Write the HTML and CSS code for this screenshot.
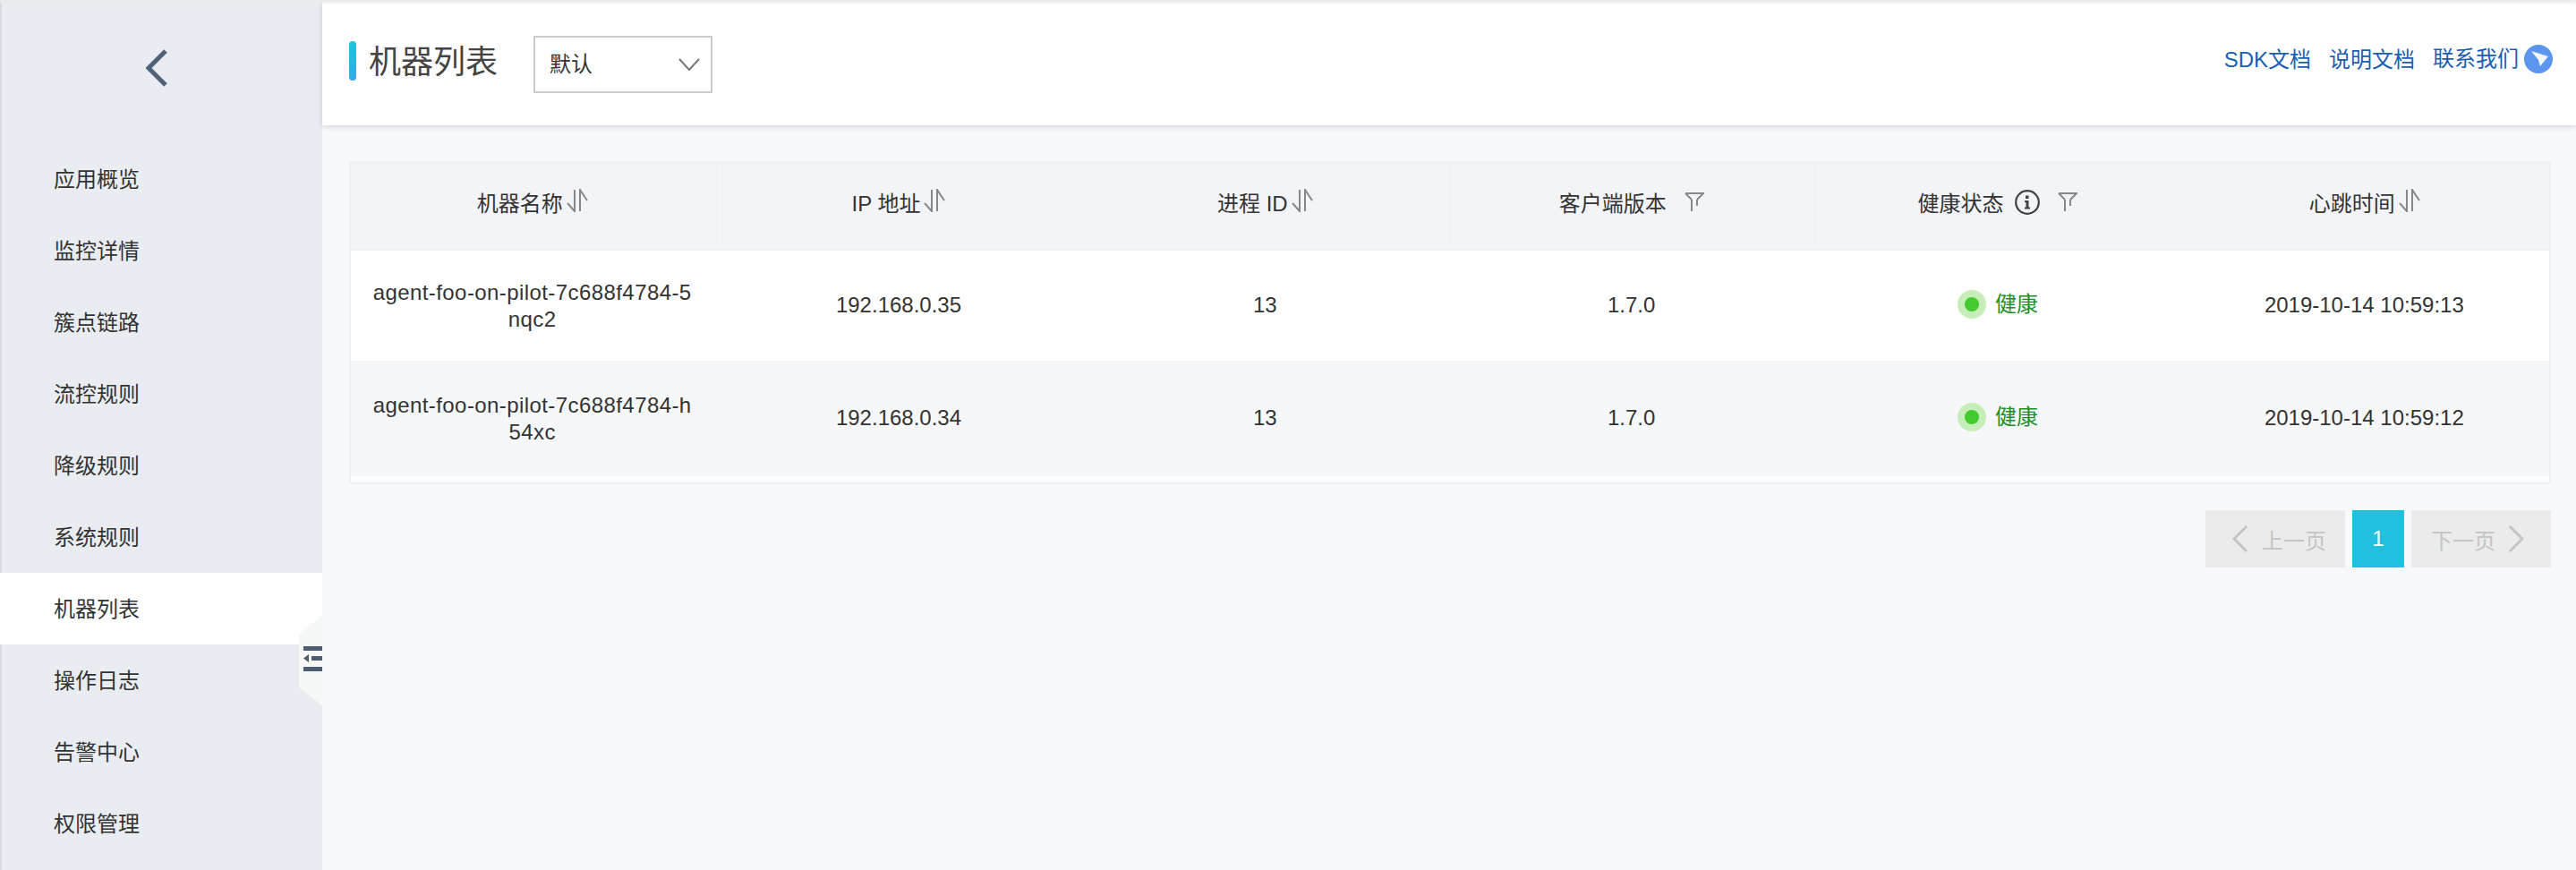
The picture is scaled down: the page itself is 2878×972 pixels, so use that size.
FILE: index.html
```html
<!DOCTYPE html>
<html lang="zh-CN">
<head>
<meta charset="utf-8">
<title>机器列表</title>
<link rel="stylesheet" href="styles.css">
</head>
<body>
<div class="app">
  <aside class="sidebar">
    <div class="back">
      <svg class="back-icon" viewBox="0 0 26 42"><path d="M23 2 L4 21 L23 40"/></svg>
    </div>
    <nav class="nav">
      <a class="nav-item">应用概览</a>
      <a class="nav-item">监控详情</a>
      <a class="nav-item">簇点链路</a>
      <a class="nav-item">流控规则</a>
      <a class="nav-item">降级规则</a>
      <a class="nav-item">系统规则</a>
      <a class="nav-item active">机器列表</a>
      <a class="nav-item">操作日志</a>
      <a class="nav-item">告警中心</a>
      <a class="nav-item">权限管理</a>
    </nav>
    <div class="collapse">
      <svg class="collapse-icon" viewBox="0 0 21 28"><path d="M0 0H21V5H0ZM9 11H21V16H9ZM0 23H21V28H0ZM6 9V18L0 13.5Z"/></svg>
    </div>
  </aside>
  <main class="main">
    <header class="topbar">
      <div class="title-wrap">
        <span class="title-bar"></span>
        <h1 class="title">机器列表</h1>
        <div class="select">
          <span class="select-text">默认</span>
          <svg class="select-arrow" viewBox="0 0 24 14"><path d="M1 1 L12 13 L23 1"/></svg>
        </div>
      </div>
      <div class="links">
        <a class="link">SDK文档</a>
        <a class="link">说明文档</a>
        <a class="link link-contact">联系我们
          <svg class="contact-icon" viewBox="0 0 32 32"><circle cx="16" cy="16" r="16" fill="#5b95ee"/><path d="M8 7 L27 13 L18 24 L16 17 Z" fill="#f2f6fd"/></svg>
        </a>
      </div>
    </header>
    <section class="content">
      <div class="table-box">
        <table class="table">
          <thead>
            <tr>
              <th><span class="th">机器名称<svg class="sort" viewBox="0 0 24 26"><path d="M1 16L9 25V1M15 25V1L23 13"/></svg></span></th>
              <th><span class="th">IP 地址<svg class="sort" viewBox="0 0 24 26"><path d="M1 16L9 25V1M15 25V1L23 13"/></svg></span></th>
              <th><span class="th">进程 ID<svg class="sort" viewBox="0 0 24 26"><path d="M1 16L9 25V1M15 25V1L23 13"/></svg></span></th>
              <th><span class="th">客户端版本<svg class="filter" viewBox="0 0 22 22"><path d="M1 1H21L14 8M8 8L1 1M14 8V15M8 8V21"/></svg></span></th>
              <th><span class="th">健康状态<svg class="info" viewBox="0 0 28 28"><circle cx="14" cy="14" r="12.800"/><path class="info-dot" d="M12 6.500H15.500V10H12ZM11 12H15.500V19.500H17V21.500H11V19.500H12.500V14H11Z"/></svg><svg class="filter" viewBox="0 0 22 22"><path d="M1 1H21L14 8M8 8L1 1M14 8V15M8 8V21"/></svg></span></th>
              <th><span class="th">心跳时间<svg class="sort" viewBox="0 0 24 26"><path d="M1 16L9 25V1M15 25V1L23 13"/></svg></span></th>
            </tr>
          </thead>
          <tbody>
            <tr class="row-a">
              <td class="cell-name">agent-foo-on-pilot-7c688f4784-5nqc2</td>
              <td><span class="cell-text">192.168.0.35</span></td>
              <td><span class="cell-text">13</span></td>
              <td><span class="cell-text">1.7.0</span></td>
              <td><span class="health"><i class="dot"></i>健康</span></td>
              <td><span class="cell-text">2019-10-14 10:59:13</span></td>
            </tr>
            <tr class="row-b">
              <td class="cell-name">agent-foo-on-pilot-7c688f4784-h54xc</td>
              <td><span class="cell-text">192.168.0.34</span></td>
              <td><span class="cell-text">13</span></td>
              <td><span class="cell-text">1.7.0</span></td>
              <td><span class="health"><i class="dot"></i>健康</span></td>
              <td><span class="cell-text">2019-10-14 10:59:12</span></td>
            </tr>
          </tbody>
        </table>
      </div>
      <div class="pager">
        <button class="page-btn page-nav page-prev" disabled>
          <svg class="page-arrow" viewBox="0 0 18 32"><path d="M16 2 L2 16 L16 30"/></svg>上一页
        </button>
        <button class="page-btn page-current">1</button>
        <button class="page-btn page-nav page-next" disabled>
          下一页<svg class="page-arrow" viewBox="0 0 18 32"><path d="M2 2 L16 16 L2 30"/></svg>
        </button>
      </div>
    </section>
  </main>
</div>
</body>
</html>
```

FILE: styles.css
```css
* { box-sizing: border-box; }
html, body { margin: 0; height: 100%; }
body {
  font-family: "Liberation Sans", "Noto Sans CJK SC", sans-serif;
  font-size: 24px;
  color: #333;
  background: #f7f9fd;
  overflow: hidden;
}
.app {
  display: flex;
  height: 972px;
  position: relative;
}
.app::after {
  content: "";
  position: absolute;
  left: 0;
  right: 0;
  top: 0;
  height: 6px;
  background: linear-gradient(#e9eaec, rgba(240, 240, 242, 0));
  pointer-events: none;
}
.sidebar {
  width: 360px;
  flex: none;
  background: #e9edf2;
  position: relative;
  overflow: hidden;
  box-shadow: inset 2px 0 0 #d6d9df;
}
.back {
  height: 160px;
  padding: 55px 0 0 162px;
}
.back-icon {
  display: block;
  width: 26px;
  height: 42px;
  fill: none;
  stroke: #4f6279;
  stroke-width: 5;
}
.nav { display: flex; flex-direction: column; }
.nav-item {
  height: 80px;
  padding: 0 0 4px 60px;
  display: flex;
  align-items: center;
  color: #333;
}
.nav-item.active { background: #fff; }
.collapse {
  position: absolute;
  left: 334px;
  top: 688px;
  width: 52px;
  height: 100px;
  background: #f6f7f7;
  clip-path: polygon(0 20%, 50% 0, 100% 0, 100% 100%, 50% 100%, 0 80%);
}
.collapse-icon {
  position: absolute;
  left: 5px;
  top: 34px;
  width: 21px;
  height: 28px;
  fill: #4d5d73;
}
.main {
  flex: 1;
  min-width: 0;
  display: flex;
  flex-direction: column;
}
.topbar {
  height: 140px;
  flex: none;
  background: #fff;
  box-shadow: 0 2px 6px rgba(0, 0, 0, 0.14);
  display: flex;
  justify-content: space-between;
  padding: 0 26px 0 30px;
  position: relative;
}
.title-wrap {
  display: flex;
  align-items: flex-start;
  padding-top: 40px;
}
.title-bar {
  width: 8px;
  height: 44px;
  margin-top: 6px;
  border-radius: 4px;
  background: linear-gradient(#20c2de, #38a8ea);
}
.title {
  margin: 2px 0 0 14px;
  width: 184px;
  font-size: 36px;
  font-weight: 400;
  line-height: 56px;
  color: #444;
}
.select {
  width: 200px;
  height: 64px;
  border: 2px solid #ccc;
  display: flex;
  align-items: center;
  justify-content: space-between;
  padding: 0 12px 0 16px;
  color: #333;
}
.select-text { margin-bottom: 5px; }
.select-arrow {
  width: 24px;
  height: 14px;
  fill: none;
  stroke: #777;
  stroke-width: 2;
}
.links {
  display: flex;
  align-items: flex-start;
  gap: 20px;
  padding-top: 50px;
  color: #1a5eb2;
  line-height: 34px;
}
.link-contact {
  display: flex;
  align-items: center;
  gap: 6px;
  height: 32px;
}
.contact-icon { width: 32px; height: 32px; }
.content {
  flex: 1;
  padding: 40px 28px 0 30px;
}
.table-box {
  border: 2px solid #eff1f4;
  background: #fbfcfe;
  padding-bottom: 7px;
}
.table {
  width: 100%;
  table-layout: fixed;
  border-collapse: separate;
  border-spacing: 0;
}
th {
  height: 98px;
  padding: 0 3px 9px 0;
  font-weight: 400;
  background: #f3f4f8;
  border-bottom: 2px solid #eef0f3;
  border-right: 1px solid #f0f1f5;
  color: #333;
}
th:last-child { border-right: 0; }
td {
  text-align: center;
  padding: 0 26px 0 22px;
  line-height: 30px;
  word-break: break-all;
  color: #333;
}
.cell-name { letter-spacing: 0.42px; }
.cell-text { position: relative; top: -1px; }
.row-a td { height: 123px; background: #fff; }
.row-b td { height: 129px; background: #f6f7f8; }
.th {
  display: inline-flex;
  align-items: center;
  justify-content: center;
}
.sort {
  width: 24px;
  height: 26px;
  margin-left: 4px;
  margin-top: -3px;
  fill: none;
  stroke: #85888d;
  stroke-width: 2;
}
.filter {
  width: 22px;
  height: 22px;
  margin-left: 20px;
  fill: none;
  stroke: #85888d;
  stroke-width: 2;
}
.info {
  width: 28px;
  height: 28px;
  margin-left: 13px;
  fill: none;
  stroke: #3f4246;
  stroke-width: 2.200;
}
.info-dot { fill: #3f4246; stroke: none; }
.health {
  display: inline-flex;
  align-items: center;
  position: relative;
  top: 2px;
  color: #1f8f24;
}
.dot {
  width: 32px;
  height: 32px;
  margin-right: 10px;
  border-radius: 50%;
  background: #42ca2e;
  border: 8px solid #c6eeb9;
}
.pager {
  display: flex;
  justify-content: flex-end;
  gap: 8px;
  margin-top: 29px;
}
.page-btn {
  height: 64px;
  border: 0;
  font: inherit;
  padding: 0;
  display: flex;
  align-items: center;
}
.page-nav {
  width: 156px;
  background: #ebebeb;
  color: #c4c4c4;
}
.page-prev { padding-left: 30px; gap: 15px; }
.page-next { padding-left: 22px; gap: 14px; }
.page-current {
  width: 58px;
  justify-content: center;
  background: #20c0de;
  color: #fff;
}
.page-arrow {
  width: 18px;
  height: 32px;
  fill: none;
  stroke: #c4c4c4;
  stroke-width: 3;
}
```
